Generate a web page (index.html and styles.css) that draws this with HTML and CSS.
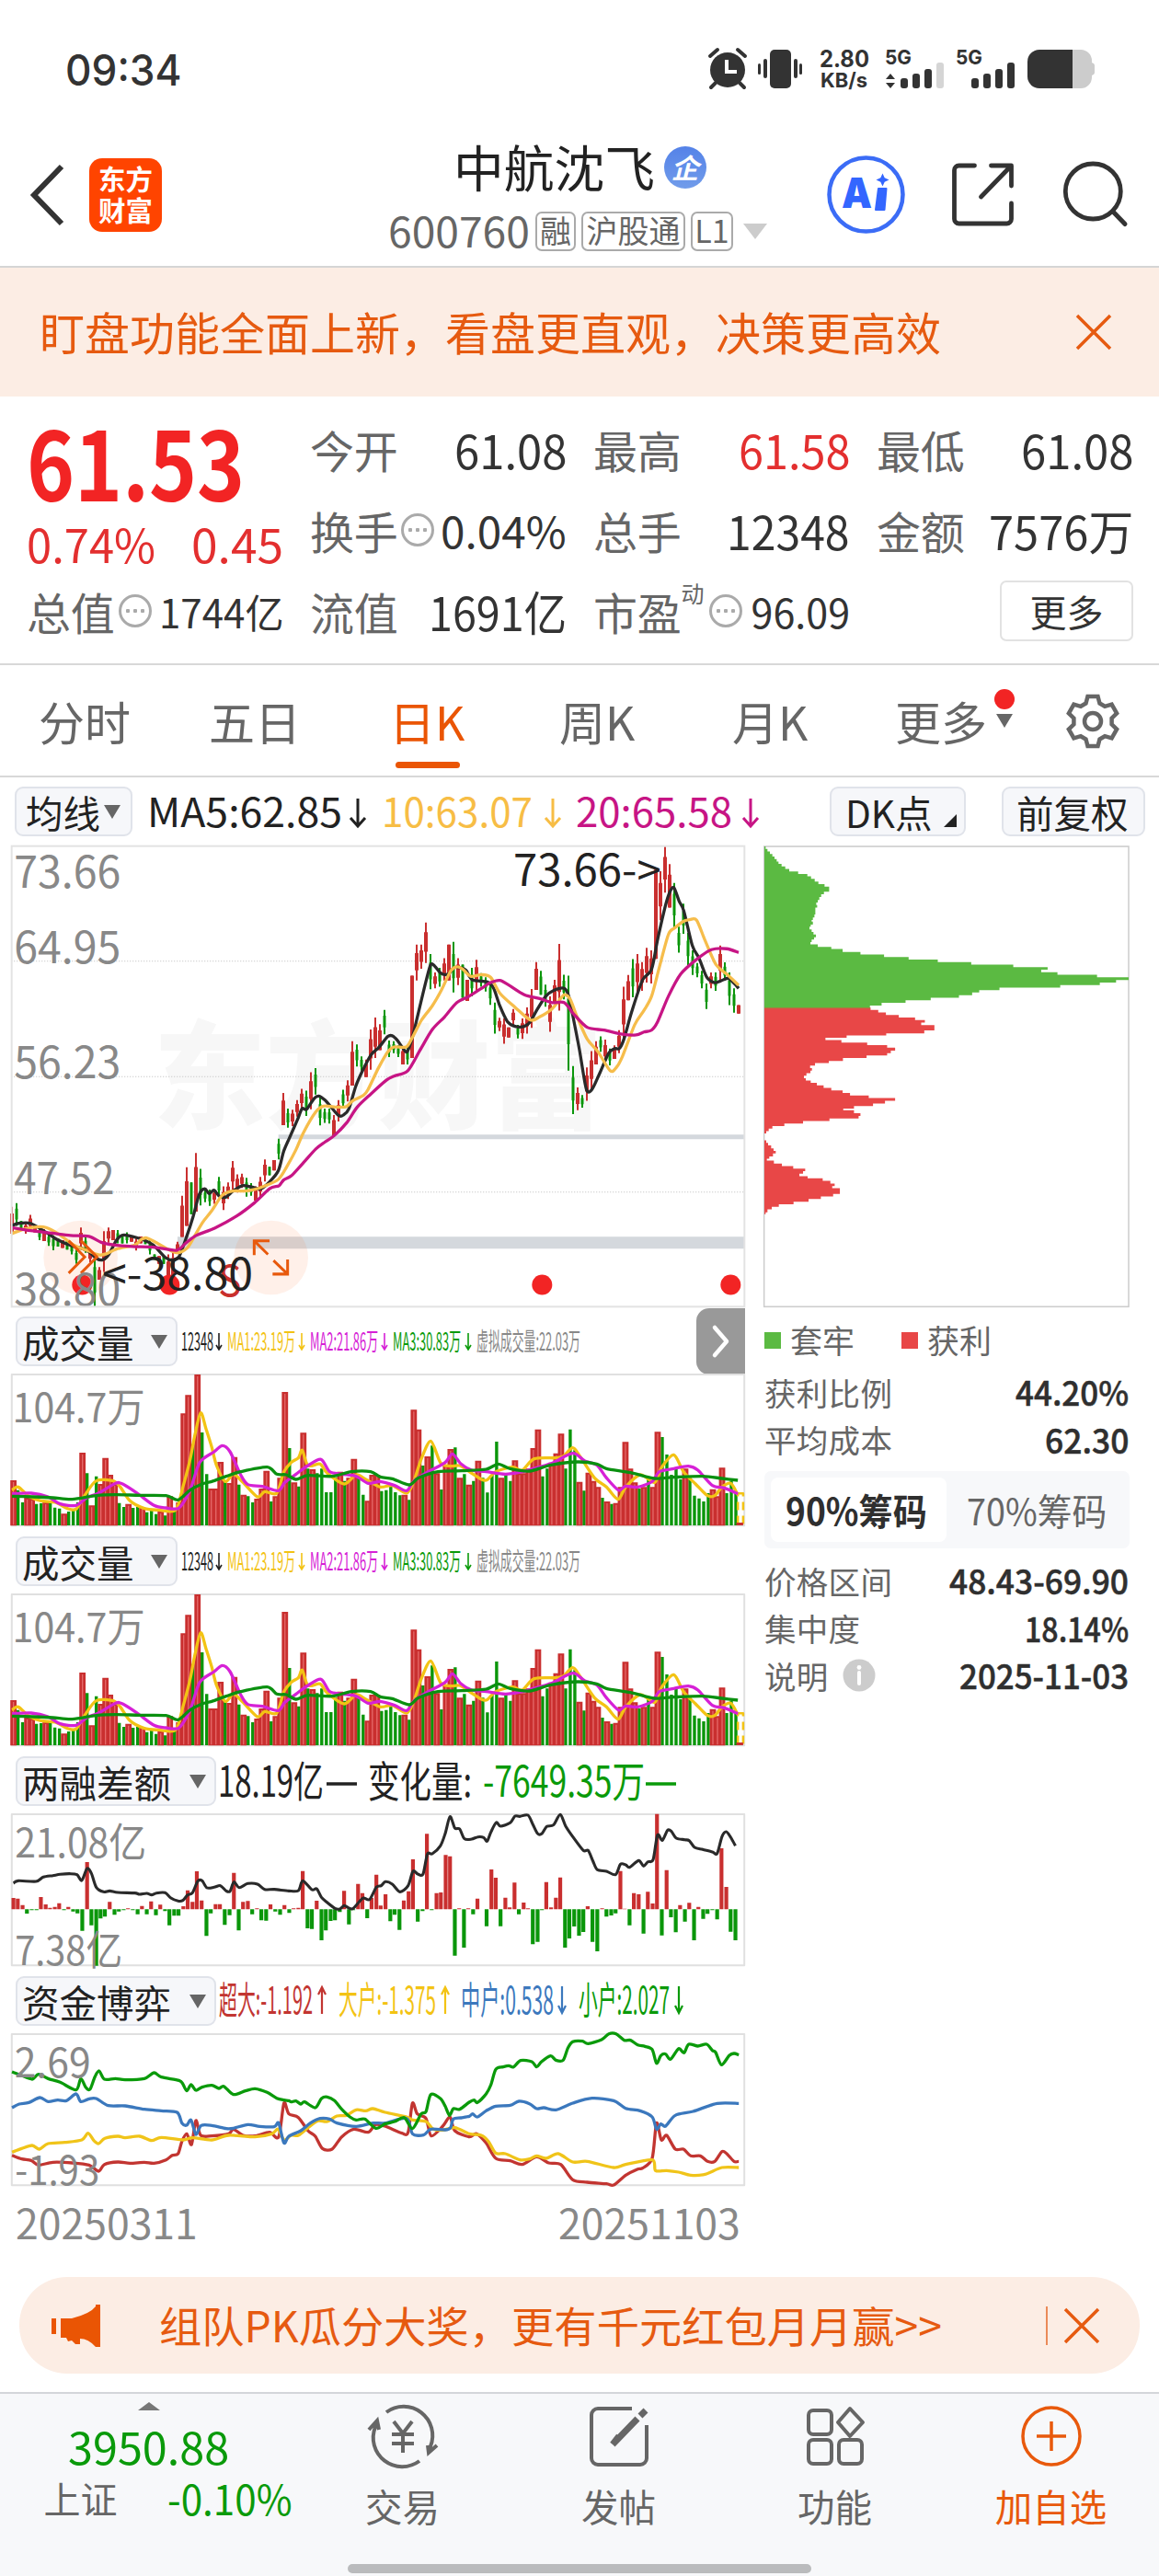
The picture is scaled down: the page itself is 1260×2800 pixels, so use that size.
FILE: index.html
```html
<!DOCTYPE html>
<html lang="zh-CN">
<head>
<meta charset="utf-8">
<title>中航沈飞 600760</title>
<link rel="stylesheet" href="styles.css">
</head>
<body>
<header class="status">
  <span class="clock" data-w="127">09:34</span>
  <svg class="status-icons" width="430" height="48" viewBox="0 0 430 48">
    <g fill="#333">
      <circle cx="21" cy="24" r="19"/>
      <path d="M2 9l8-7M40 9l-8-7M8 38l-5 5M34 38l5 5" stroke="#333" stroke-width="4" stroke-linecap="round"/>
      <path d="M20 13v13h11" stroke="#fff" stroke-width="4" fill="none"/>
      <rect x="67" y="2" width="23" height="42" rx="5"/>
      <rect x="60" y="12" width="4" height="21" rx="2"/><rect x="54" y="17" width="3" height="12" rx="1.5"/>
      <rect x="93" y="12" width="4" height="21" rx="2"/><rect x="99" y="17" width="3" height="12" rx="1.5"/>
      <text class="net" x="121" y="21" textLength="54" lengthAdjust="spacingAndGlyphs">2.80</text>
      <text class="net small" x="122" y="43" textLength="51" lengthAdjust="spacingAndGlyphs">KB/s</text>
      <text class="net small" x="192" y="18" textLength="29" lengthAdjust="spacingAndGlyphs">5G</text>
      <text class="net small" x="269" y="18" textLength="29" lengthAdjust="spacingAndGlyphs">5G</text>
      <path d="M193 34l5-6 5 6zM193 38l5 6 5-6z"/>
      <rect x="209" y="33" width="8" height="11" rx="3"/><rect x="222" y="28" width="8" height="16" rx="3"/><rect x="235" y="23" width="8" height="21" rx="3"/>
      <rect x="248" y="16" width="8" height="28" rx="3" fill="#d5d5d5"/>
      <rect x="286" y="33" width="8" height="11" rx="3"/><rect x="299" y="28" width="8" height="16" rx="3"/><rect x="312" y="23" width="8" height="21" rx="3"/><rect x="325" y="16" width="8" height="28" rx="3"/>
      <path d="M360 2h45a12 12 0 0 1 12 12v2q3 1 3 3v8q0 2-3 3v2a12 12 0 0 1-12 12h-45z" fill="#ccc"/>
      <path d="M396 2h-36a13 13 0 0 0-13 13v16a13 13 0 0 0 13 13h36z"/>
    </g>
  </svg>
</header>

<nav class="topbar">
  <div class="topbar-left">
    <svg width="40" height="70" viewBox="0 0 40 70"><path d="M36 4L6 35 36 66" fill="none" stroke="#333" stroke-width="6"/></svg>
    <div class="logo"><span>东方</span><span>财富</span></div>
  </div>
  <div class="stock">
    <div class="stock-name"><span data-w="219">中航沈飞</span><i class="corp">企</i></div>
    <div class="stock-code"><span class="code" data-w="154">600760</span><span class="tag t1">融</span><span class="tag t3">沪股通</span><span class="tag t2">L1</span><i class="caret pale"></i></div>
  </div>
  <svg class="top-icons" width="340" height="100" viewBox="890 160 340 100" fill="none">
    <circle cx="941.500" cy="211.500" r="40" stroke="#3b6cf6" stroke-width="4.500"/>
    <g fill="#3366ff"><text class="ai" x="915" y="226" textLength="33" lengthAdjust="spacingAndGlyphs">A</text><path d="M955 205h8.500l-2 23h-9.500z" stroke="#3366ff" stroke-width="2" stroke-linejoin="round"/><path d="M959.500 188.500l2.200 4.800 4.800 2.200-4.800 2.200-2.200 4.800-2.200-4.800-4.800-2.200 4.800-2.200z"/></g>
    <path d="M1059.500 180h-17a5 5 0 0 0-5 5v53a5 5 0 0 0 5 5h52a5 5 0 0 0 5-5v-17M1077.500 180h22v22M1098.500 181l-32 33" stroke="#333" stroke-width="4.800" stroke-linecap="round" stroke-linejoin="round"/>
    <circle cx="1188.300" cy="208" r="30" stroke="#333" stroke-width="4.800"/><path d="M1210 230l13 13.500" stroke="#333" stroke-width="5" stroke-linecap="round"/>
  </svg>
</nav>

<section class="notice">
  <span data-w="980">盯盘功能全面上新，看盘更直观，决策更高效</span>
  <svg width="40" height="40" viewBox="0 0 40 40"><path d="M2 2l36 36M38 2L2 38" stroke="#e65a10" stroke-width="3.500"/></svg>
</section>

<section class="quote">
  <div class="price-box">
    <div class="price"><span data-w="237">61.53</span></div>
    <div class="change"><span data-w="140">0.74%</span><span data-w="100">0.45</span></div>
  </div>
  <div class="cell"><label>今开</label><b data-w="122">61.08</b></div>
  <div class="cell"><label>最高</label><b class="up" data-w="121">61.58</b></div>
  <div class="cell"><label>最低</label><b data-w="122">61.08</b></div>
  <div class="cell"><label>换手</label><i class="more-dot"></i><b class="mid" data-w="137">0.04%</b></div>
  <div class="cell"><label>总手</label><b data-w="134">12348</b></div>
  <div class="cell"><label>金额</label><b data-w="157">7576万</b></div>
  <div class="cell"><label>总值</label><i class="more-dot"></i><b class="low" data-w="135">1744亿</b></div>
  <div class="cell"><label>流值</label><b data-w="150">1691亿</b></div>
  <div class="cell"><label>市盈<sup>动</sup></label><i class="more-dot pe"></i><b class="low" data-w="107">96.09</b></div>
  <div class="cell end"><button class="more-btn">更多</button></div>
</section>

<nav class="tabs">
  <span class="tab a">分时</span><span class="tab b">五日</span><span class="tab c on">日K</span><span class="tab d">周K</span><span class="tab e">月K</span>
  <span class="tab f">更多<em></em></span>
  <svg class="gear" width="64" height="64" viewBox="-32 -32 64 64" fill="none" stroke="#666" stroke-width="4.500"><path d="M-5.500-27H5.500L7.500-19.500 13.100-16.200 20.600-18.300 26.100-8.700 20.600-3.300V3.300L26.100 8.700 20.600 18.300 13.100 16.200 7.500 19.500 5.500 27H-5.500L-7.500 19.500-13.100 16.200-20.600 18.300-26.100 8.700-20.600 3.300V-3.300L-26.100-8.700-20.600-18.300-13.100-16.200-7.500-19.500z"/><circle r="9"/></svg>
</nav>

<section class="ma-bar">
  <button class="chip ma">均线<i class="caret"></i></button>
  <svg width="690" height="54" viewBox="150 854 690 54">
    <g class="ma-text"><text x="160" y="898" textLength="212" lengthAdjust="spacingAndGlyphs">MA5:62.85</text><text x="415" y="898" textLength="164" lengthAdjust="spacingAndGlyphs" fill="#f7bd45">10:63.07</text><text x="626" y="898" textLength="170" lengthAdjust="spacingAndGlyphs" fill="#c71585">20:65.58</text></g>
    <g fill="none" stroke-width="3"><path d="M389 867v30m-8-9l8 9 8-9" stroke="#222"/><path d="M601 867v30m-8-9l8 9 8-9" stroke="#f7bd45"/><path d="M816 867v30m-8-9l8 9 8-9" stroke="#c71585"/></g>
  </svg>
  <button class="chip dk">DK点<i></i></button>
  <button class="chip fq">前复权</button>
</section>

<main class="board">
  <div class="charts">
    <svg class="kline" id="kline" width="798" height="502" viewBox="36 54 2394 1458" preserveAspectRatio="none"></svg>
    <div class="ind first"><button class="chip i3">成交量<i class="caret"></i></button>
      <svg class="legend" width="440" height="50" viewBox="196 1430 440 50"><use href="#vol-legend"/></svg>
      <button class="expand"><svg width="20" height="36" viewBox="0 0 20 36"><path d="M3 3l13 15L3 33" fill="none" stroke="#fff" stroke-width="4.500" stroke-linecap="round" stroke-linejoin="round"/></svg></button></div>
    <svg class="sub" id="vol1" width="798" height="166" viewBox="23 220 1525 498" preserveAspectRatio="none"></svg>
    <div class="ind"><button class="chip i3">成交量<i class="caret"></i></button>
      <svg class="legend" width="440" height="50" viewBox="196 1430 440 50"><g id="vol-legend" class="vol-legend">
        <text x="197" y="1467" textLength="35" lengthAdjust="spacingAndGlyphs" fill="#222">12348</text><text x="247" y="1467" textLength="74" lengthAdjust="spacingAndGlyphs" fill="#f3c314">MA1:23.19万</text><text x="337" y="1467" textLength="74" lengthAdjust="spacingAndGlyphs" fill="#d621d6">MA2:21.86万</text><text x="427" y="1467" textLength="74" lengthAdjust="spacingAndGlyphs" fill="#0a9a0a">MA3:30.83万</text><text x="518" y="1467" textLength="113" lengthAdjust="spacingAndGlyphs" fill="#888">虚拟成交量:22.03万</text>
        <g fill="none" stroke-width="1.600"><path d="M238 1448v18m-3-5l3 5 3-5" stroke="#222"/><path d="M328 1448v18m-3-5l3 5 3-5" stroke="#f3c314"/><path d="M418 1448v18m-3-5l3 5 3-5" stroke="#d621d6"/><path d="M509 1448v18m-3-5l3 5 3-5" stroke="#0a9a0a"/></g></g></svg></div>
    <svg class="sub" id="vol2" width="798" height="166" viewBox="23 220 1525 498" preserveAspectRatio="none"></svg>
    <div class="ind"><button class="chip i4">两融差额<i class="caret"></i></button>
      <svg class="legend wide" width="560" height="54" viewBox="236 1909 560 54"><g class="big-legend"><text x="237" y="1953" textLength="115" lengthAdjust="spacingAndGlyphs">18.19亿</text><text x="400" y="1953" textLength="113" lengthAdjust="spacingAndGlyphs">变化量:</text><text x="525" y="1953" textLength="176" lengthAdjust="spacingAndGlyphs" fill="#0a9a0a">-7649.35万</text><path d="M355 1939h33" stroke="#222" stroke-width="3.500"/><path d="M702 1939h33" stroke="#0a9a0a" stroke-width="3.500"/></g></svg></div>
    <svg class="sub" id="margin" width="798" height="166" viewBox="23 214 1525 498" preserveAspectRatio="none"></svg>
    <div class="ind"><button class="chip i4">资金博弈<i class="caret"></i></button>
      <svg class="legend wide" width="560" height="54" viewBox="236 2149 560 54"><g class="fund-legend"><text x="238" y="2190" textLength="102" lengthAdjust="spacingAndGlyphs" fill="#c23531">超大:-1.192</text><text x="368" y="2190" textLength="106" lengthAdjust="spacingAndGlyphs" fill="#f3c314">大户:-1.375</text><text x="501" y="2190" textLength="101" lengthAdjust="spacingAndGlyphs" fill="#3b78bd">中户:0.538</text><text x="629" y="2190" textLength="99" lengthAdjust="spacingAndGlyphs" fill="#0a9a0a">小户:2.027</text>
      <g fill="none" stroke-width="2.200"><path d="M350 2190v-29m-4 8l4-8 4 8" stroke="#c23531"/><path d="M484 2190v-29m-4 8l4-8 4 8" stroke="#f3c314"/><path d="M611 2160v29m-4-8l4 8 4-8" stroke="#3b78bd"/><path d="M738 2160v29m-4-8l4 8 4-8" stroke="#0a9a0a"/></g></g></svg></div>
    <svg class="sub" id="fund" width="798" height="166" viewBox="23 212 1525 498" preserveAspectRatio="none"></svg>
    <div class="dates"><span data-w="198">20250311</span><span data-w="198">20251103</span></div>
  </div>
  <aside class="chips">
    <svg class="chip-chart" id="chips" width="398" height="502" viewBox="61 54 1193 1458" preserveAspectRatio="none"></svg>
    <div class="chip-key"><i class="g"></i><span>套牢</span><i class="r"></i><span>获利</span></div>
    <dl><dt>获利比例</dt><dd data-w="123">44.20%</dd></dl>
    <dl><dt>平均成本</dt><dd data-w="91">62.30</dd></dl>
    <div class="toggle"><button class="on"><span data-w="154">90%筹码</span></button><button class="off"><span data-w="152">70%筹码</span></button></div>
    <dl><dt>价格区间</dt><dd data-w="195">48.43-69.90</dd></dl>
    <dl><dt>集中度</dt><dd data-w="113">18.14%</dd></dl>
    <dl><dt>说明<svg width="36" height="36" viewBox="0 0 36 36"><circle cx="18" cy="18" r="17.500" fill="#ccc"/><path d="M18 15v12" stroke="#fff" stroke-width="4" stroke-linecap="round"/><circle cx="18" cy="9.500" r="2.400" fill="#fff"/></svg></dt><dd data-w="184">2025-11-03</dd></dl>
  </aside>
</main>

<section class="promo">
  <svg width="54" height="48" viewBox="56 2503 54 48" fill="#ea5504"><path d="M66 2519h12q20-5 26-13v-2h5v46h-5q-8-9-17-9v6h-5l-4-4-4 1-2-4h-6zM56 2519h5v17h-5z"/></svg>
  <span data-w="851">组队PK瓜分大奖，更有千元红包月月赢&gt;&gt;</span>
  <i></i>
  <svg width="38" height="38" viewBox="0 0 38 38"><path d="M1 1l36 36M37 1L1 37" stroke="#e65a10" stroke-width="3.500"/></svg>
</section>

<footer class="dock">
  <div class="index">
    <i class="up-caret"></i>
    <span class="idx-val" data-w="175">3950.88</span>
    <div class="idx-row"><span class="idx-name">上证</span><span class="idx-pct" data-w="136">-0.10%</span></div>
  </div>
  <div class="act"><svg width="78" height="70" viewBox="-39 -35 78 70" fill="none" stroke="#666" stroke-width="4"><path d="M-18-26A31.500 31.500 0 0 1 30 11l-1 4M18 27A31.500 31.500 0 0 1-30-10l1-5M-37-7l9-10 2 10M37 10l-9 8-1-8M-10-16L0-3 10-16M0-3V18M-12-2h24M-12 8h24"/></svg><span>交易</span></div>
  <div class="act"><svg width="78" height="70" viewBox="-39 -35 78 70" fill="none" stroke="#666" stroke-width="4"><path d="M14-30h-37a7 7 0 0 0-7 7v47a7 7 0 0 0 7 7h46a7 7 0 0 0 7-7v-36"/><path d="M-7 9L20-19M23-22l6-6M-7 9l7-9" stroke-width="7"/></svg><span>发帖</span></div>
  <div class="act"><svg width="78" height="70" viewBox="-39 -35 78 70" fill="none" stroke="#666" stroke-width="4" stroke-linejoin="round"><rect x="-29" y="-28" width="25" height="26" rx="5"/><rect x="-29" y="4" width="25" height="26" rx="5"/><rect x="4" y="4" width="25" height="26" rx="5"/><path d="M16-30l14 15-14 15L3-15z"/></svg><span>功能</span></div>
  <div class="act hot"><svg width="78" height="70" viewBox="-39 -35 78 70" fill="none" stroke="#e8590c" stroke-width="3.500"><circle r="31"/><path d="M-16 0h32M0-16v32"/></svg><span>加自选</span></div>
  <div class="home"></div>
</footer>
<script src="charts.js"></script>
</body>
</html>
```
FILE: styles.css
```css
* { box-sizing: border-box; }
body { margin: 0; width: 1260px; height: 2800px; background: #fff; color: #333; font-family: "Noto Sans CJK SC", "Noto Sans", sans-serif; display: flex; flex-direction: column; overflow: hidden; }
button { font: inherit; color: inherit; border: 0; background: none; padding: 0; margin: 0; white-space: nowrap; }
svg { display: block; flex: none; overflow: visible; }
i, em { font-style: normal; }
[data-w] { display: inline-block; white-space: nowrap; flex: none; transform-origin: 0 50%; }

.status { height: 110px; flex: none; display: flex; justify-content: space-between; padding: 52px 60px 0 71px; }
.clock { font: 500 47px/48px Inter, sans-serif; }
.net { font: 700 25px Inter, sans-serif; }
.net.small { font-size: 22px; }

.topbar { height: 181px; flex: none; display: grid; grid-template-columns: 390px 480px 390px; border-bottom: 2px solid #d5d5d5; }
.topbar-left { display: flex; padding: 62px 0 0 31px; gap: 26px; align-items: flex-start; }
.topbar-left > svg { margin-top: 5px; }
.logo { width: 79px; height: 80px; border-radius: 14px; background: #ff4400; color: #fff; font-weight: 700; font-size: 29.500px; line-height: 34px; display: flex; flex-direction: column; align-items: center; padding-top: 4px; }
.stock { padding-top: 41px; display: flex; flex-direction: column; align-items: center; }
.stock-name { height: 60px; display: flex; align-items: center; gap: 10px; font-size: 54px; line-height: 60px; color: #222; }
.corp { width: 46px; height: 46px; border-radius: 50%; background: linear-gradient(#5482e8, #719cea); color: #fff; font: italic 700 30px/44px "Noto Sans CJK SC", sans-serif; text-align: center; margin-top: 2px; }
.stock-code { height: 44px; margin-top: 18px; display: flex; align-items: center; color: #666; margin-left: -4px; }
.code { font-size: 45px; line-height: 44px; margin-top: -2px; }
.tag { height: 43px; border: 2px solid #aaa; border-radius: 7px; font-size: 34px; line-height: 36px; text-align: center; margin-left: 6px; }
.t1 { width: 44px; } .t3 { width: 113px; } .t2 { width: 46px; }
.caret { width: 0; height: 0; border: solid transparent; border-width: 15px 9.500px 0; border-top-color: #666; }
.caret.pale { border-width: 17px 13px 0; border-top-color: #ccc; margin-left: 11px; }
.top-icons { margin: 50px 0 0 20px; }
.ai { font: 900 46px Inter, sans-serif; }

.notice { height: 140px; flex: none; background: #fcede4; color: #e65a10; font-size: 49px; line-height: 140px; display: flex; align-items: center; justify-content: space-between; padding: 0 51px 0 43px; }
.notice span { margin-top: -3px; }

.quote { height: 292px; flex: none; display: grid; grid-template: repeat(3, 88px) / repeat(4, 279px); column-gap: 29px; padding: 16px 28px 0 29px; border-bottom: 2px solid #d8d8d8; }
.price-box { grid-row: span 2; }
.price { color: #f22424; font-weight: 700; font-size: 104px; line-height: 104px; height: 104px; padding-top: 1px; }
.change { display: flex; justify-content: space-between; color: #e32f2f; font-size: 51px; line-height: 60px; padding-top: 9px; }
.cell { display: flex; justify-content: space-between; align-items: center; line-height: 88px; padding-bottom: 6px; }
.cell label { color: #666; font-size: 48px; white-space: nowrap; margin-right: 0; flex: none; letter-spacing: -.3px; }
.cell b { font-weight: 400; font-size: 51px; }
.cell b.up { color: #e32f2f; }
.cell b.mid { font-size: 47px; }
.cell b.low { font-size: 43px; }
.cell sup { font-size: 25px; line-height: 0; vertical-align: 30px; }
.cell.end { justify-content: flex-end; }
.more-dot { width: 36px; height: 36px; border: 3px solid #aaa; border-radius: 50%; flex: none; margin: 0 3px 0 0; background: radial-gradient(circle, #aaa 2px, transparent 2.500px) 50% 50% / 8px 30px; background-clip: content-box; padding: 0 3px; }
.more-btn { width: 145px; height: 66px; border: 2px solid #e2e2e2; border-radius: 7px; font-size: 40px; line-height: 58px; }

.tabs { height: 122px; flex: none; display: flex; border-bottom: 2px solid #d8d8d8; font-size: 50px; line-height: 121px; color: #666; padding-left: 42px; }
.tab { white-space: nowrap; height: 120px; position: relative; }
.a { width: 185px; } .b { width: 196px; } .c { width: 185px; } .d { width: 188px; } .e { width: 177px; } .f { width: 183px; }
.tab.on { color: #ea5504; }
.tab.on::after { content: ""; position: absolute; left: 7px; top: 105px; width: 70px; height: 7px; border-radius: 4px; background: #ea5504; }
.tab em { position: absolute; left: 110px; top: 53px; border: solid transparent; border-width: 15px 9px 0; border-top-color: #666; }
.tab em::before { content: ""; position: absolute; left: -11px; top: -42px; width: 22px; height: 22px; border-radius: 50%; background: #f22424; }
.gear { margin-top: 29px; }

.ma-bar { height: 74px; flex: none; display: flex; padding: 10px 15px 0 16px; }
.chip { height: 54px; border: 2px solid #e0e3ea; border-radius: 9px; background: #f6f7fa; color: #222; font-size: 40.500px; line-height: 45px; display: flex; align-items: center; flex: none; }
.chip.ma { width: 128px; padding-left: 10px; gap: 4px; margin-right: 6px; }
.ma-text { font-size: 43.500px; fill: #222; }
.dk { width: 148px; margin-left: 62px; padding-left: 15px; }
.dk i { border: 7px solid; border-color: transparent #222 #222 transparent; margin: 20px 0 0 12px; }
.fq { width: 156px; margin-left: 39px; padding-left: 14px; }

.board { height: 1541px; flex: none; display: flex; padding-left: 12px; }
.charts { width: 798px; margin-right: 20px; }
.ind { height: 73px; display: flex; align-items: flex-start; padding: 11px 0 0 5px; }
.ind.first { height: 72px; padding-top: 10px; }
.i3, .i4 { padding-left: 5px; justify-content: space-between; padding-right: 9px; }
.i3 { width: 176px; } .i4 { width: 218px; }
.legend { margin-left: 3px; margin-top: 0; }
.legend.wide { margin-left: 1px; }
.expand { width: 53px; height: 72px; border-radius: 14px 0 0 14px; background: #999; margin: -9px 0 0 121px; display: flex; align-items: center; justify-content: center; flex: none; }
.vol-legend { font-size: 27px; }
.big-legend { font-size: 46px; fill: #222; }
.fund-legend { font-size: 41px; }
.dates { display: flex; justify-content: space-between; padding: 9px 5px 0 5px; color: #888; font-size: 45px; line-height: 60px; }

.chips { width: 398px; }
.chip-key { display: flex; align-items: center; font-size: 35px; line-height: 52px; color: #666; height: 52px; margin: 9px 0 5px; }
.chip-key i { width: 18px; height: 18px; margin: 2px 10px 0 1px; }
.chip-key .g { background: #5bba42; }
.chip-key .r { background: #e84747; margin-left: 51px; }
.chips dl { margin: 0; height: 51.500px; display: flex; justify-content: space-between; line-height: 50px; padding-right: 1px; }
.chips dt { color: #666; font-size: 34.500px; display: flex; align-items: center; gap: 15px; padding-left: 1px; letter-spacing: .3px; }
.chips dd { margin: 0; font-size: 37px; font-weight: 500; color: #2f2f2f; -webkit-text-stroke: .5px #2f2f2f; }
.toggle { width: 397px; height: 84px; margin: 9px 0 9px 1px; background: #f7f8fa; border-radius: 7px; padding: 7px; display: grid; grid-template-columns: 191px 1fr; font-size: 40px; line-height: 64px; color: #666; }
.toggle .on { background: #fff; border-radius: 8px; color: #2f2f2f; font-weight: 700; padding-right: 6px; }
.toggle .off { padding-left: 5px; }

.promo { width: 1218px; height: 105px; flex: none; margin: 15px 0 0 21px; border-radius: 52px; background: #fcede4; display: flex; align-items: center; padding: 0 44px 0 35px; color: #e65a10; font-size: 46px; line-height: 96px; }
.promo span { margin-top: -3px; margin-left: 63px; }
.promo i { width: 2px; height: 42px; background: #ea8a58; margin: 0 18px 0 auto; }

.dock { margin-top: 20px; height: 200px; flex: none; border-top: 2px solid #d4d6da; background: #f7f8fa; display: grid; grid-template: 184px 14px / 320px repeat(4, 1fr); }
.index { display: flex; flex-direction: column; align-items: center; padding: 9px 0 0 3px; white-space: nowrap; }
.up-caret { border: solid transparent; border-width: 0 12px 9px; border-bottom-color: #777; }
.idx-val { color: #0a9a0a; font-size: 48px; line-height: 60px; margin-top: 8px; }
.idx-row { width: 270px; margin-left: 42px; display: flex; justify-content: space-between; align-items: center; font-size: 40px; line-height: 60px; margin-top: -3px; }
.idx-name { color: #666; }
.idx-pct { color: #0a9a0a; font-size: 45px; }
.act { display: flex; flex-direction: column; align-items: center; font-size: 40.500px; line-height: 60px; padding-top: 11px; color: #666; }
.act span { margin-top: 11px; }
.act.hot { color: #e8590c; }
.home { grid-column: 1 / -1; width: 504px; height: 10px; border-radius: 5px; background: #babbbd; margin: 1px auto 0; }
.axis { fill: #888; font-size: 137px; }
.mark { fill: #222; font-size: 137px; }
.wm { fill: #f7f7f7; font-size: 370px; font-weight: 900; }
.ns { vector-effect: non-scaling-stroke; fill: none; stroke-linejoin: round; }
```
FILE: charts.js
```js
// Squeeze or stretch labels to their column width.
document.querySelectorAll('[data-w]').forEach(el => {
  const target = +el.dataset.w, natural = el.offsetWidth;
  el.style.transform = `scaleX(${target / natural})`;
  el.style.marginRight = `${target - natural}px`;
});

const pts = s => s.trim().split(/\s+/).map(p => p.split(',').map(Number));
function curve(s) {
  const p = pts(s);
  let d = `M${p[0]}`;
  for (let i = 0; i < p.length - 1; i++) {
    const a = p[i - 1] || p[i], b = p[i], c = p[i + 1], e = p[i + 2] || c, k = 7;
    d += `C${b[0] + (c[0] - a[0]) / k},${b[1] + (c[1] - a[1]) / k} ${c[0] - (e[0] - b[0]) / k},${c[1] - (e[1] - b[1]) / k} ${c}`;
  }
  return d;
}
const line = (s, color, w) => `<path class="ns" d="${curve(s)}" stroke="${color}" stroke-width="${w}"/>`;
const RED = '#c92f2f', GREEN = '#0a960a';

// ---- daily candles: colour, high, low, optional body top/bottom ----
const candles = `r1195-1280b g1183-1255 g1240-1270 r1245-1280 r1220-1270 r1255-1275 g1265-1300 r1265-1303b g1280-1318 g1285-1332 g1295-1320 r1300-1325b
g1300-1330 g1310-1345 g1330-1375 r1260-1330 g1290-1340 r1330-1370 g1345-1512 r1385-1425b r1272-1400 r1260-1308 r1268-1300 g1268-1310 g1285-1310 g1275-1310
r1290-1305b r1295-1333 r1288-1310 g1292-1312 g1300-1345 g1345-1362 r1350-1375b g1350-1375 r1345-1440b r1340-1410b r1305-1340 r1160-1290b r1070-1255b
g1118-1218b r1025-1210b g1075-1190 g1140-1180 g1140-1192 r1140-1185 g1100-1160 r1130-1205 r1118-1170 r1050-1140 r1092-1150 r1090-1135 g1103-1163 g1120-1160
r1130-1175b r1100-1165 r1045-1115 g1068-1095 r1047-1080 g980-1045 r835-937b g885-945 r888-940 r858-910 r822-885 g828-908 r770-887 g757-840 g850-938
g885-930 g885-932 r905-970b r858-925 g825-885 r795-862 r672-812b g682-752 g720-765 r730-785b r635-762 r597-725 r618-700b g573-650 g670-722 g672-710
g685-722 r690-745b g690-745 r465-725B r367-480 r367-443 r297-425 g397-508 r455-505 g440-500 r410-480 r367-480B g358-518 r410-495 g430-535b r478-545B
g440-530 r415-512 g457-500 g470-515 g485-557 g550-648 r598-640 r600-680 r628-660 r570-620 g620-663 r600-665 r565-648 r507-630 r422-510b g450-525b
g493-563 r530-642 r478-550b r365-575 g462-540 g465-765 g750-902 r818-890 g842-882 r755-860 r703-825 r672-745b g657-705 r667-740 g695-748 r685-728b
r637-710 r500-665 r463-543b g413-533 r397-520 r422-513 r377-487 r385-490 r130-412B r135-290 r55-203 r113-250b g172-315 g310-392 g238-333 g330-432
g385-463 g425-470 g450-505 g490-570 r455-505 g455-513 r370-480 g423-480 g455-558 g505-582 r558-585B`.trim().split(/\s+/);
let wick = { r: '', g: '' }, body = { r: '', g: '' };
candles.forEach((c, i) => {
  const [, k, a, b, f] = c.match(/([rg])(\d+)-(\d+)([bB]?)/), x = 39 + i * 15, h = b - a;
  wick[k] += `M${x} ${a}V${b}`;
  const full = f === 'B' || h < 35 || h > 90 && f && k === 'g';
  const t = full ? +a : +a + h * .24, u = full ? +b : +b - h * (f ? 0 : .28);
  body[k] += `M${x} ${t}V${u}`;
});
const ma5 = `36,1255 60,1247 100,1247 150,1275 190,1300 235,1318 265,1325 290,1337 315,1358 335,1362 355,1345 380,1300 400,1284 430,1288 470,1300 500,1315 540,1355 565,1363 585,1350 610,1285 630,1225 650,1155 668,1138 682,1153 698,1142 714,1160 735,1165 760,1145 790,1128 820,1132 850,1138 880,1115 908,1080 925,1020 945,975 970,920 985,885 1000,887 1025,852 1040,845 1060,858 1080,880 1105,907 1120,905 1138,885 1160,815 1180,770 1210,715 1235,692 1265,657 1280,655 1295,668 1315,695 1328,705 1345,660 1365,580 1390,480 1405,430 1418,435 1435,455 1450,462 1465,458 1480,440 1500,440 1520,448 1540,478 1590,485 1610,505 1630,560 1655,610 1680,625 1710,625 1730,610 1750,575 1780,530 1805,512 1840,505 1855,530 1870,600 1890,700 1912,822 1930,825 1955,775 1985,710 2005,695 2020,695 2035,665 2060,580 2095,480 2125,445 2145,350 2170,245 2185,200 2198,187 2215,230 2230,260 2258,370 2280,410 2305,470 2330,487 2350,482 2375,473 2395,490 2409,505`;
const ma10 = `36,1280 80,1265 120,1258 150,1260 190,1280 240,1315 290,1335 325,1347 350,1342 380,1328 440,1315 460,1298 478,1293 510,1308 550,1330 580,1340 610,1325 630,1295 660,1245 690,1208 725,1158 760,1145 800,1145 830,1140 860,1130 908,1108 940,1060 965,1015 990,960 1030,895 1055,877 1100,880 1130,878 1150,860 1185,843 1200,825 1235,755 1265,705 1285,690 1325,690 1345,660 1375,605 1410,560 1440,510 1470,450 1490,437 1510,445 1535,467 1570,462 1600,470 1630,520 1680,565 1730,605 1760,595 1800,570 1830,535 1842,525 1860,540 1880,590 1915,665 1950,705 1990,765 2010,755 2030,720 2070,620 2100,575 2125,530 2150,440 2180,335 2200,315 2230,293 2250,288 2272,290 2300,355 2335,430 2370,460 2409,495`;
const ma20 = `36,1260 100,1270 170,1278 230,1285 290,1288 330,1307 370,1315 430,1320 500,1322 575,1332 605,1310 640,1285 700,1262 770,1225 830,1182 880,1137 910,1128 925,1110 950,1097 990,1055 1030,1012 1060,990 1090,970 1130,930 1165,880 1210,838 1260,795 1285,782 1330,765 1370,700 1410,635 1450,595 1490,550 1530,530 1570,505 1600,487 1630,480 1660,495 1710,525 1760,537 1800,550 1840,550 1870,585 1915,628 1970,637 2030,650 2075,652 2100,643 2125,637 2145,610 2180,530 2220,460 2270,415 2320,383 2370,380 2409,392`;
const fit = (cls, x, y, w, t) => `<text class="${cls}" x="${x}" y="${y}" textLength="${w}" lengthAdjust="spacingAndGlyphs">${t}</text>`;
document.getElementById('kline').innerHTML =
  fit('wm', 500, 920, 1465, '东方财富') +
  `<path d="M36 419H2427M36 784H2427M36 1148H2427" stroke="#ccc" stroke-width="3" stroke-dasharray="4 5"/>
  <path d="M908 967H2427v14H908zM579 1289H2427v38H579z" fill="#d4d8dd"/>
  <g fill="#ff6a2a" fill-opacity=".1"><ellipse cx="263" cy="1355" rx="121" ry="117"/><ellipse cx="884" cy="1355" rx="121" ry="117"/></g>
  <g stroke-width="6"><path d="${wick.r}" stroke="${RED}"/><path d="${wick.g}" stroke="${GREEN}"/></g>
  <g stroke-width="12"><path d="${body.r}" stroke="${RED}"/></g><g stroke-width="9"><path d="${body.g}" stroke="${GREEN}"/></g>` +
  line(ma5, '#2a2a2a', 3.3) + line(ma10, '#f6bd4b', 3.3) + line(ma20, '#c71585', 3.3) +
  `<g fill="#f22424"><ellipse cx="268" cy="1441" rx="33" ry="32"/><ellipse cx="553" cy="1441" rx="33" ry="32"/><ellipse cx="1768" cy="1441" rx="33" ry="32"/><ellipse cx="2383" cy="1441" rx="33" ry="32"/></g>
  <path d="M224 1302l52 51-52 51M264 1302l52 51-52 51M874 1345l-45-43m0 45v-45h50M892 1364l46 43m0-46v46h-49" fill="none" stroke="#e8590c" stroke-width="9"/>` +
  `<text x="712" y="1476" font-size="135" fill="#c9302c" textLength="76" lengthAdjust="spacingAndGlyphs">S</text>` +
  [['73.66', 188], ['64.95', 426], ['56.23', 790], ['47.52', 1155], ['38.80', 1506]].map(a => fit('axis', 46, a[1], a[0] === '47.52' ? 328 : 348, a[0])).join('') +
  fit('mark', 1674, 182, 482, '73.66-&gt;') + fit('mark', 333, 1456, 492, '&lt;-38.80') +
  `<rect x="38" y="56" width="2390" height="1454" fill="none" stroke="#e3e3e3" stroke-width="6"/>`;

// ---- turnover volume ----
const vol = `568r 600g 640g 625r 628r 645g 643g 640r 640g 657g 660g 677r 670g 665g 640g 478r 545g 650r 555g 580r 495r 550r 580r 642g 655g 645r 658g 655g 655r 672g 665g 678g 670r 683g 620r 665g 640r 350r 290r 450g 223r 412g 548g 595r 595r 508r 575g 577r 492r 582g 615r 620g 640g 628r 595r 537r 637g 620r 560r 280r 463g 575r 588g 413r 530g 532r 545g 530g 607g 607g 560g 540r 570g 560r 498r 560g 615g 635r 550r 550r 603g 600g 580g 607g 617g 615r 632g 338r 402r 520g 490r 455g 545r 598g 520r 466r 461g 560r 548g 582r 570g 504r 560g 608g 550g 442g 560r 545g 570g 503r 545r 545r 530r 463r 402r 555g 530g 510r 480r 416r 530g 402g 470g 573r 602g 543r 570r 590r 625g 637r 645g 642r 590r 443r 530r 575r 595g 590r 560g 590r 410r 427g 484g 550g 530g 565g 530r 560g 618g 627g 637g 610g 597r 620r 527r 610g 570g 610g`.split(' ');
const volY = '25,600 38,590 60,620 85,635 115,640 140,660 158,662 175,620 200,570 235,570 250,590 270,635 300,660 330,665 365,665 380,590 395,500 405,420 417,348 428,400 440,460 450,520 468,572 485,548 505,575 535,622 550,605 575,610 590,540 605,510 620,495 628,470 640,520 665,515 680,545 715,580 740,550 760,565 790,590 815,585 845,610 860,570 875,500 895,440 915,510 935,522 955,520 975,540 1000,565 1012,567 1030,540 1065,525 1085,535 1110,498 1155,495 1170,490 1190,462 1205,490 1235,560 1260,590 1284,630 1300,590 1330,550 1360,575 1375,525 1400,485 1420,540 1445,580 1470,618 1485,618 1500,590 1518,578 1533,615';
const volM = '25,612 65,610 100,622 125,645 158,650 180,625 205,610 240,578 255,580 285,610 320,650 345,658 372,658 395,600 415,510 445,475 462,455 478,475 500,550 515,582 545,588 578,602 592,575 615,548 640,520 667,500 685,540 710,548 740,555 765,578 790,572 820,585 845,602 860,570 890,540 925,510 940,482 958,515 980,535 1010,540 1050,548 1085,540 1120,525 1150,510 1190,480 1215,505 1240,518 1260,560 1285,600 1300,587 1325,590 1355,572 1370,540 1400,530 1430,522 1450,535 1480,585 1505,593 1533,612';
const volG = '25,620 70,622 110,625 150,630 200,618 240,615 290,617 345,618 370,632 395,600 420,580 440,572 470,555 500,540 555,525 575,548 595,550 615,565 640,552 690,555 730,540 770,540 790,557 815,563 850,583 870,560 910,540 960,537 1010,532 1035,515 1060,530 1100,538 1145,518 1200,508 1240,515 1260,530 1310,543 1360,562 1400,558 1460,555 1500,562 1533,568';
let vr = '', vi = '', vg = '';
vol.forEach((v, i) => {
  const x = 28 + i * 9.56, y = parseInt(v);
  if (v.endsWith('r')) { vr += `M${x - 6.5} ${y}h13V716h-13z`; vi += `M${x} ${y + 6}V713`; }
  else vg += `M${x} ${y}V715`;
});
const frame = (y, h) => `<rect class="ns" x="24.500" y="${y + 3}" width="1522" height="${h - 5}" stroke="#e0e0e0" stroke-width="2"/>`;
// Text inside a stretched viewBox: undo the stretch, then place the baseline at y.
const label = (t, y, w, x) => `<text transform="translate(${x} ${y}) scale(1.911 3)" fill="#888" font-size="44" textLength="${w}" lengthAdjust="spacingAndGlyphs">${t}</text>`;
['vol1', 'vol2'].forEach(id => {
  document.getElementById(id).innerHTML = frame(220, 498) + label('104.7万', 378, 144, 26) +
    `<path d="${vg}" stroke="#0a960a" stroke-width="6.500"/><path d="${vr}" fill="#c92f2f"/><path d="${vi}" stroke="#e56a6a" stroke-width="2.500"/>
     <rect class="ns" x="1533" y="611" width="11" height="100" stroke="#f3c314" stroke-width="2.500" stroke-dasharray="9 6"/><path d="M1530 706h14v9h-14z" fill="#c92f2f"/>` +
    line(volY, '#f3c314', 3.3) + line(volM, '#d621d6', 3.3) + line(volG, '#0a9010', 3.3);
});

// ---- margin balance ----
const mUp = '28,490 37,492 47,513 85,487 95,511 104,522 114,519 123,507 142,519 181,373 228,503 266,524 295,516 314,501 333,512 381,517 390,465 400,503 409,403 419,498 448,510 457,510 486,408 505,503 515,500 534,524 562,511 591,513 610,524 620,522 629,402 658,499 715,467 744,444 753,474 772,490 782,414 791,515 801,478 839,498 849,468 858,364 887,281 907,474 916,472 926,350 935,354 954,524 973,524 992,492 1021,397 1030,424 1050,489 1059,521 1069,440 1088,505 1097,524 1135,438 1145,521 1155,489 1164,423 1221,517 1251,524 1289,402 1298,525 1317,474 1327,478 1346,470 1356,508 1365,216 1385,399 1413,513 1432,506 1451,519 1499,328 1509,454';
const mDn = '56,541 66,530 76,530 133,530 152,534 161,540 171,597 190,579 200,711 209,557 218,551 238,545 247,534 257,530 276,530 286,543 305,543 324,546 343,533 352,579 362,548 371,548 429,614 438,540 467,578 477,546 496,596 524,543 543,563 553,564 572,534 582,545 601,539 639,589 648,591 668,628 677,596 687,565 696,563 706,536 725,576 734,530 763,556 811,566 820,545 830,594 868,567 878,533 897,530 945,678 964,652 983,543 1011,582 1040,582 1078,543 1107,641 1117,633 1126,530 1174,652 1183,622 1193,583 1203,613 1212,601 1231,633 1241,664 1260,551 1270,547 1279,540 1308,579 1337,606 1375,612 1394,553 1404,602 1423,567 1442,628 1461,558 1470,542 1480,530 1490,560 1518,600 1528,628';
const mLine = '28,442 38,434 75,436 90,422 110,417 125,413 145,411 160,414 170,433 181,394 190,410 200,455 215,470 228,467 245,472 280,474 290,478 305,475 315,480 325,474 343,473 355,490 370,500 380,498 390,480 400,473 411,435 420,434 430,457 445,455 458,450 470,467 478,468 486,438 497,456 515,443 535,445 550,462 570,462 600,467 620,466 629,434 648,463 658,460 668,488 680,505 696,524 706,526 715,515 725,523 733,525 745,505 755,490 768,495 782,455 792,450 801,437 815,445 831,470 848,450 858,403 868,412 879,412 888,347 898,346 915,320 925,280 935,225 945,262 955,265 965,297 980,298 993,291 1005,293 1012,305 1020,275 1031,244 1040,256 1060,245 1070,223 1080,224 1097,220 1107,250 1117,280 1126,280 1136,257 1150,252 1164,218 1175,255 1190,290 1212,335 1222,335 1232,370 1241,398 1260,403 1279,414 1289,380 1300,382 1308,390 1327,368 1337,386 1346,372 1357,365 1366,285 1376,302 1387,269 1395,273 1405,295 1423,300 1432,303 1443,325 1460,332 1480,340 1490,345 1500,290 1509,274 1518,292 1528,320';
const stems = s => pts(s).map(p => `M${p[0]} 527V${p[1]}`).join('');
document.getElementById('margin').innerHTML = frame(214, 498) +
  `<path d="${stems(mUp)}" stroke="#c92f2f" stroke-width="8"/><path d="${stems(mDn)}" stroke="#0a960a" stroke-width="8"/>` +
  line(mLine, '#2a2a2a', 3.1) + label('21.08亿', 359, 143, 31) + label('7.38亿', 709, 117, 31);

// ---- money flow by order size ----
const fG = '25,338 45,350 67,362 80,346 100,360 125,372 158,397 168,360 178,388 187,395 197,355 206,335 217,362 240,360 260,364 300,360 320,341 335,355 372,366 380,378 388,400 397,380 407,398 420,388 440,382 455,392 465,385 485,412 510,400 530,393 555,405 575,424 590,430 600,432 605,436 615,433 625,443 633,436 655,455 668,425 680,420 695,432 710,460 727,485 740,495 758,492 781,522 800,508 820,500 840,487 857,523 875,475 885,468 895,412 915,425 925,450 934,480 942,458 955,460 975,437 985,430 992,438 1010,410 1020,380 1030,330 1045,322 1057,318 1067,322 1082,301 1105,305 1115,322 1125,305 1144,286 1155,300 1170,300 1180,260 1190,240 1210,238 1222,246 1250,233 1265,214 1280,214 1297,235 1310,235 1325,250 1340,255 1355,265 1364,310 1373,285 1383,280 1393,297 1410,262 1421,276 1431,248 1450,254 1468,248 1480,268 1487,275 1499,315 1515,285 1525,278 1535,283';
const fB = '25,455 40,443 60,438 83,422 100,435 120,430 138,432 158,410 168,435 185,426 200,425 225,448 260,449 300,460 335,465 368,470 378,505 388,512 397,495 407,542 418,513 440,513 470,523 485,522 515,510 540,516 570,517 579,505 590,570 600,548 625,530 645,505 665,490 685,492 700,505 740,516 775,505 800,505 845,490 857,540 880,544 895,525 925,527 936,520 942,492 958,488 975,483 982,475 992,485 1010,465 1030,450 1060,447 1078,434 1100,442 1115,458 1130,455 1155,462 1190,440 1230,424 1275,432 1300,457 1330,465 1355,485 1364,525 1373,508 1383,515 1403,480 1440,467 1490,441 1535,441';
const fY = '25,600 45,588 67,578 82,590 100,572 135,568 170,560 183,538 195,562 205,572 218,555 245,548 260,553 290,548 315,562 335,552 380,560 400,553 440,560 475,545 530,550 565,540 578,525 590,560 605,545 620,545 640,520 660,498 680,500 700,482 720,480 740,462 760,465 775,458 800,470 845,485 858,495 885,500 900,525 920,528 945,520 975,540 1000,545 1015,565 1030,603 1050,605 1080,625 1100,622 1115,612 1135,620 1160,605 1190,632 1220,630 1275,650 1300,640 1355,625 1362,660 1385,660 1410,665 1435,675 1465,672 1500,650 1535,650';
const fR = '25,610 45,622 65,627 80,642 110,633 150,635 185,642 205,662 217,640 245,632 270,636 300,633 320,636 345,625 358,610 370,605 378,565 388,540 398,575 407,497 417,545 440,547 475,540 485,525 505,545 530,547 560,535 579,550 590,440 600,475 620,487 640,530 655,548 670,588 690,590 710,550 735,525 765,535 780,510 800,515 835,538 848,535 857,440 867,475 885,490 896,547 920,515 935,485 945,530 975,550 990,540 1010,570 1030,620 1060,628 1085,640 1115,615 1140,635 1165,640 1190,690 1220,698 1260,703 1275,707 1300,675 1325,655 1335,652 1355,620 1364,505 1374,560 1385,545 1403,590 1420,590 1435,612 1455,612 1470,630 1485,630 1500,598 1510,605 1525,630 1535,630';
document.getElementById('fund').innerHTML = frame(212, 498) +
  line(fR, '#c23531', 3.3) + line(fY, '#f0c419', 3.3) + line(fB, '#3b78bd', 3.3) + line(fG, '#0a9a0a', 3.3) +
  label('2.69', 355, 83, 30) + label('-1.93', 706, 92, 31);

// ---- chip distribution: row top, row right edge ----
const steps = (s, end) => {
  const p = pts(s);
  return `M64 ${p[0][0]}` + p.map(([y, x], i) => `H${x}V${i + 1 < p.length ? p[i + 1][0] : end}`).join('') + 'H64z';
};
const trapped = '57,68 65,74 73,82 81,90 89,97 97,104 105,110 112,120 120,132 128,145 136,174 144,204 151,216 159,228 168,240 176,260 184,275 200,258 208,249 217,243 226,238 234,233 242,236 250,230 272,227 281,222 289,218 294,222 304,215 310,211 319,218 327,224 335,232 344,226 351,218 359,214 366,238 374,282 381,319 390,377 398,454 406,534 414,629 422,738 430,875 438,987 446,966 454,1019 462,1148 470,1251 479,1210 487,1157 495,1028 503,830 511,764 518,741 527,698 535,606 543,524 551,446 559,408';
const profit = '566,410 573,435 581,460 589,502 597,555 605,587 613,575 621,618 638,585 647,461 654,332 661,263 668,315 676,399 684,464 692,490 702,476 710,464 717,397 725,320 734,274 741,229 749,213 757,219 765,214 773,201 781,193 789,199 796,215 803,235 811,257 819,282 827,319 835,343 843,404 851,490 860,457 869,418 877,356 885,321 890,356 899,377 908,371 916,276 924,190 932,129 940,90 948,78 956,70 963,64 985,70 993,76 1001,86 1010,94 1018,101 1026,92 1036,80 1043,72 1049,95 1058,121 1066,158 1074,197 1082,190 1090,178 1098,205 1105,254 1113,279 1121,293 1129,285 1136,310 1154,288 1162,248 1170,208 1179,159 1187,111 1195,88 1203,74 1212,68';
document.getElementById('chips').innerHTML =
  `<rect x="63" y="57" width="1188" height="1453" fill="none" stroke="#ccc" stroke-width="4.500"/><path d="${steps(trapped, 566)}" fill="#5bba42"/><path d="${steps(profit, 1218)}" fill="#e84747"/><path d="M64 567H409" stroke="#a5803e" stroke-width="3"/>`;
```
